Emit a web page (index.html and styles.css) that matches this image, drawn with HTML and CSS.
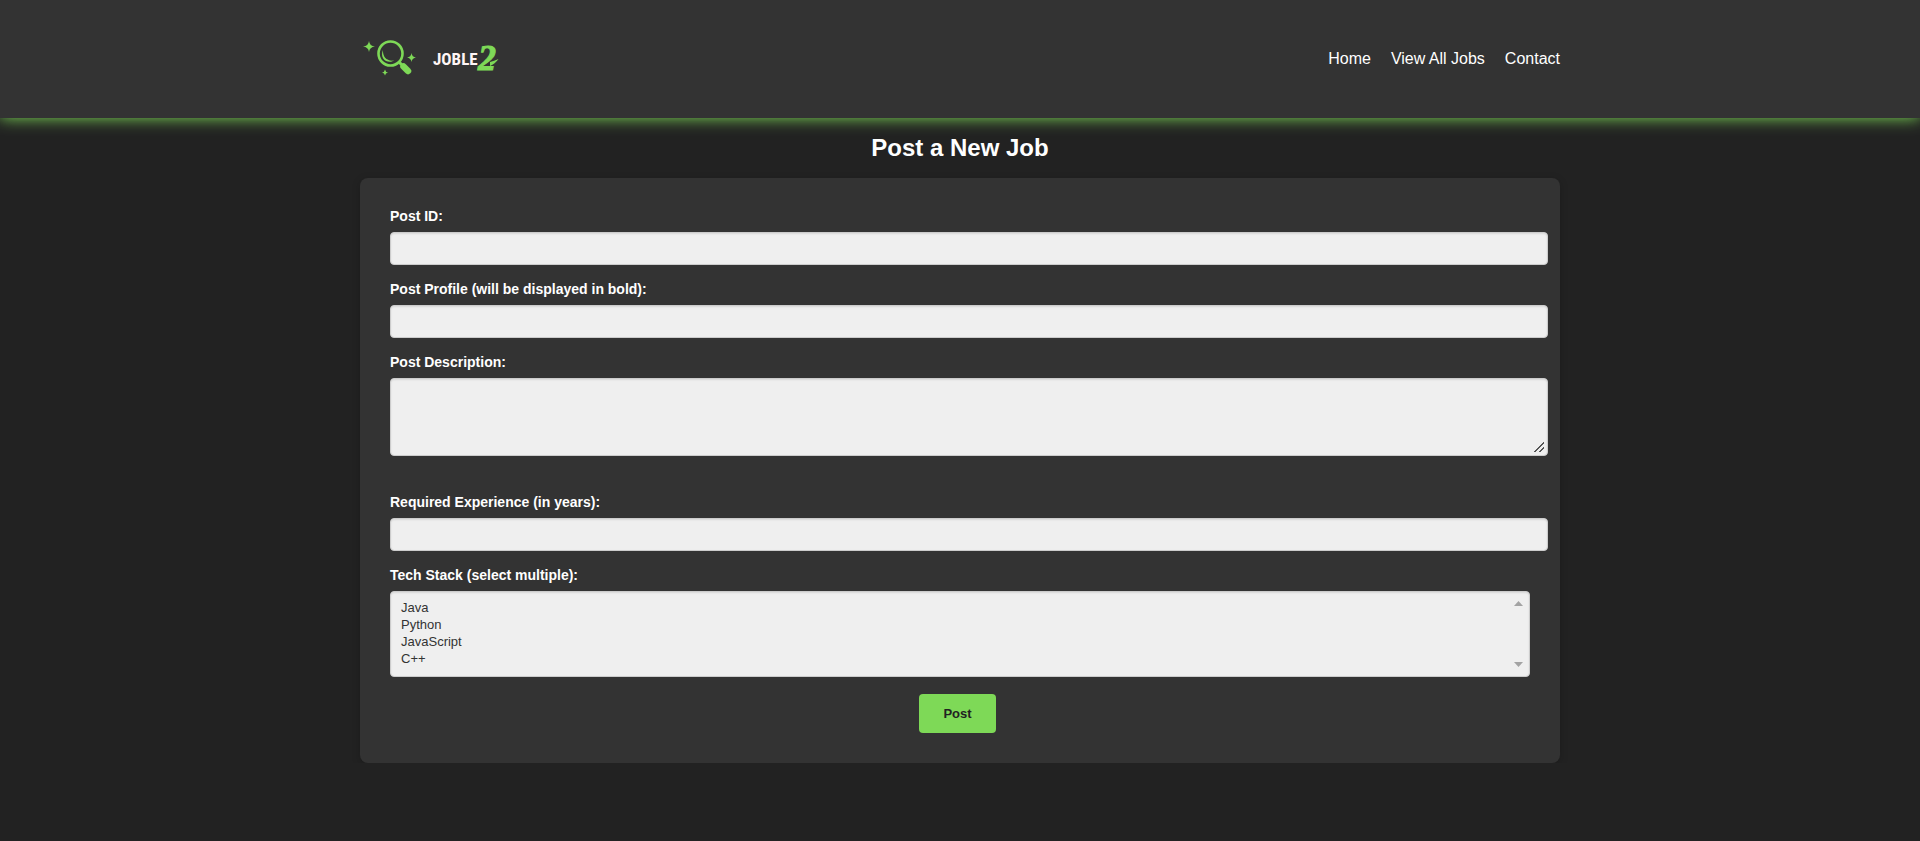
FILE: index.html
```
<!DOCTYPE html>
<html lang="en">
<head>
<meta charset="utf-8">
<meta name="viewport" content="width=device-width, initial-scale=1">
<title>Post a New Job</title>
<link rel="stylesheet" href="styles.css">
</head>
<body>
<header class="site-header">
  <div class="container header-row">
    <a class="logo" href="#" aria-label="Joble2">
      <svg class="logo-art" width="150" height="78" viewBox="0 0 150 78" aria-hidden="true">
        <g fill="#7ed957">
          <path d="M9 21Q9.600 26 15 26.500Q9.600 27 9 32Q8.400 27 3 26.500Q8.400 26 9 21Z"/>
          <path d="M51.500 33Q52 37 56 37.500Q52 38 51.500 42Q51 38 47 37.500Q51 37 51.500 33Z"/>
          <path d="M25 49.500Q25.400 52 28 52.500Q25.400 53 25 55.500Q24.600 53 22 52.500Q24.600 52 25 49.500Z"/>
          <path d="M23 30C22.500 37 27 41.500 34 40.500C28 44.500 19 39 23 30Z"/>
        </g>
        <circle cx="30.500" cy="33.500" r="12" fill="none" stroke="#7ed957" stroke-width="2.600"/>
        <path d="M39.500 42.500L42 45" stroke="#7ed957" stroke-width="3"/>
        <path d="M43.500 46.500L48 51" stroke="#7ed957" stroke-width="6.500" stroke-linecap="round"/>
        <text class="logo-word" x="73" y="45">JOBLE</text>
        <text class="logo-two" x="118" y="50">2</text>
        <path d="M130 46Q135 44 138.500 39Q134 41 130 42Z" fill="#7ed957"/>
      </svg>
    </a>
    <nav class="nav">
      <a href="#">Home</a>
      <a href="#">View All Jobs</a>
      <a href="#">Contact</a>
    </nav>
  </div>
</header>
<main class="container">
  <h1 class="title">Post a New Job</h1>
  <form class="card">
    <div class="field">
      <label for="post-id">Post ID:</label>
      <input class="control" type="text" id="post-id">
    </div>
    <div class="field">
      <label for="profile">Post Profile (will be displayed in bold):</label>
      <input class="control" type="text" id="profile">
    </div>
    <div class="field field-long">
      <label for="description">Post Description:</label>
      <textarea class="control area" id="description"></textarea>
    </div>
    <div class="field">
      <label for="experience">Required Experience (in years):</label>
      <input class="control" type="text" id="experience">
    </div>
    <div class="field">
      <label for="stack">Tech Stack (select multiple):</label>
      <div class="list-wrap">
        <select class="control list" id="stack" multiple size="4">
          <option>Java</option>
          <option>Python</option>
          <option>JavaScript</option>
          <option>C++</option>
        </select>
        <div class="scroll-arrows" aria-hidden="true">
          <svg width="9" height="5" viewBox="0 0 9 5"><path d="M0 5L4.500 0L9 5Z" fill="#a3a3a3"/></svg>
          <svg width="9" height="5" viewBox="0 0 9 5"><path d="M0 0L4.500 5L9 0Z" fill="#a3a3a3"/></svg>
        </div>
      </div>
    </div>
    <button class="submit" type="submit">Post</button>
  </form>
</main>
</body>
</html>
```
FILE: styles.css
```
body {
  margin: 0;
  background: #222;
  color: #fff;
  font-family: "Liberation Sans", Arial, sans-serif;
  font-size: 16px;
}

.container {
  max-width: 1200px;
  margin: 0 auto;
}

.site-header {
  position: relative;
  padding: 20px 0;
  background: #333;
  box-shadow: 0 0 15px #7ed957;
}

.header-row {
  display: flex;
  justify-content: space-between;
  align-items: center;
}

.logo,
.logo-art {
  display: block;
}

.logo-word {
  fill: #fff5f5;
  font-family: "Liberation Sans Narrow", "Roboto Condensed", "Liberation Sans", sans-serif;
  font-size: 17px;
  font-weight: 700;
}

.logo-two {
  fill: #7ed957;
  stroke: #7ed957;
  stroke-width: 1px;
  font-family: "Liberation Serif", serif;
  font-size: 36px;
  font-style: italic;
  font-weight: 700;
}

.nav {
  display: flex;
  gap: 20px;
}

.nav a {
  color: #fff;
  text-decoration: none;
}

.title {
  margin: 16px 0;
  font-size: 24px;
  line-height: 28px;
  text-align: center;
}

.card {
  display: flex;
  flex-direction: column;
  padding: 30px;
  border-radius: 8px;
  background: #333;
  box-shadow: 0 2px 8px rgba(0, 0, 0, 0.2);
}

.field {
  display: flex;
  flex-direction: column;
  align-items: flex-start;
  gap: 8px;
  margin-bottom: 16px;
}

.field-long {
  margin-bottom: 38px;
}

.field label {
  font-size: 14px;
  font-weight: 700;
  line-height: 16px;
}

.control {
  box-sizing: content-box;
  width: 100%;
  height: 15px;
  margin: 0;
  padding: 8px;
  border: 1px solid #ccc;
  border-radius: 4px;
  background: #efefef;
  box-shadow: inset 0 1px 2px rgba(0, 0, 0, 0.1);
  color: #333;
  font-family: inherit;
  font-size: 13px;
}

.area {
  height: 60px;
  resize: vertical;
}

.area::-webkit-resizer {
  background: linear-gradient(135deg, transparent 46%, #555 46%, #555 56%, transparent 56%, transparent 74%, #555 74%, #555 84%, transparent 84%) 2px 2px / 10px 10px no-repeat;
}

.list-wrap {
  position: relative;
  width: 100%;
}

.list {
  display: block;
  box-sizing: border-box;
  height: 86px;
  overflow-y: scroll;
}

.list option {
  min-height: 16px;
  padding: 0 2px 1px;
  line-height: 16px;
}

.scroll-arrows {
  position: absolute;
  top: 10px;
  right: 7px;
  bottom: 10px;
  display: flex;
  flex-direction: column;
  justify-content: space-between;
  pointer-events: none;
}

.submit {
  align-self: center;
  margin-top: 1px;
  margin-right: 5px;
  padding: 12px 24px;
  border: 0;
  border-radius: 4px;
  background: #7ed957;
  color: #222;
  font-family: inherit;
  font-size: 13px;
  font-weight: 700;
  line-height: 15px;
}
```
